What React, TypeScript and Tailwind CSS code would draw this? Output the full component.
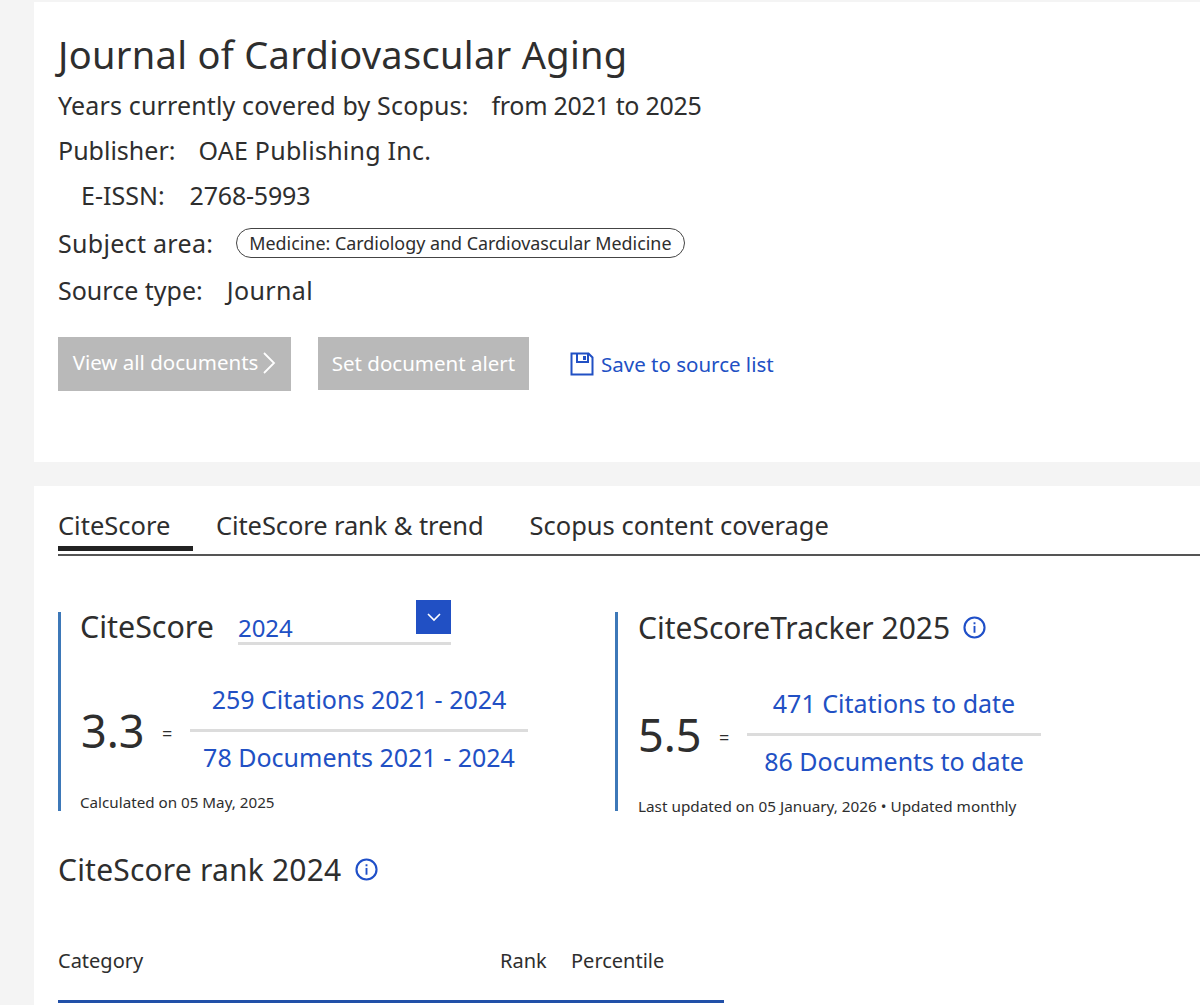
import React from 'react';

const Info = () => (
  <svg width="23" height="23" viewBox="0 0 22 22" fill="none" className="shrink-0">
    <circle cx="11" cy="11" r="9.6" stroke="#1f4fc8" strokeWidth="2" />
    <rect x="10.1" y="9.5" width="1.8" height="6.5" fill="#1f4fc8" />
    <rect x="10.1" y="6" width="1.8" height="1.9" fill="#1f4fc8" />
  </svg>
);

const Fraction = ({ value, top, bottom, width }: { value: string; top: string; bottom: string; width: string }) => (
  <div className="flex items-center">
    <span className="text-[45px] leading-none w-[81px] pb-[6px] text-[#2e2e2e]">{value}</span>
    <span className="text-[18px] w-[28px] text-[#2e2e2e]">=</span>
    <div className={`${width} text-center text-[25px] text-[#2150c4]`}>
      <div className="h-[52px] leading-[38px] border-b-[3px] border-[#dcdcdc]">{top}</div>
      <div className="h-[54px] leading-[50px]">{bottom}</div>
    </div>
  </div>
);

export default function App() {
  return (
    <div
      className="h-[1005px] overflow-hidden bg-[#f4f4f4] pt-[2px] pl-[34px] text-[#2e2e2e]"
      style={{ fontFamily: '"Noto Sans", sans-serif' }}
    >
      {/* Source details */}
      <section className="h-[460px] bg-white pl-[24px] pt-[29px]">
        <h1 className="text-[38px] leading-[46px] tracking-[0.3px]">Journal of Cardiovascular Aging</h1>
        <div className="text-[25px] leading-[45px]">
          <p className="mt-[6px]">
            <span className="tracking-[0.15px]">Years currently covered by Scopus:</span>
            <span className="ml-[23px] tracking-[-0.3px]">from 2021 to 2025</span>
          </p>
          <p>Publisher:<span className="ml-[23px] tracking-[0.25px]">OAE Publishing Inc.</span></p>
          <p className="pl-[23px]">E-ISSN:<span className="ml-[25px] tracking-[-0.2px]">2768-5993</span></p>
          <div className="flex items-center h-[50px]">
            <span className="tracking-[0.3px]">Subject area:</span>
            <span className="ml-[23px] h-[30px] rounded-full border border-[#444] px-[12px] text-[17.9px] leading-[28px]">
              Medicine: Cardiology and Cardiovascular Medicine
            </span>
          </div>
          <p>Source type:<span className="ml-[24px] tracking-[0.4px]">Journal</span></p>
        </div>
        <div className="mt-[24px] flex items-start text-[20.5px]">
          <button className="flex h-[54px] w-[233px] items-center justify-center bg-[#b9b9b9] pb-[3px] text-white">
            View all documents
            <svg width="14" height="24" viewBox="0 0 14 24" fill="none" className="ml-[4px]">
              <path d="M2 2l10 10L2 22" stroke="#fff" strokeWidth="1.8" />
            </svg>
          </button>
          <button className="ml-[27px] h-[53px] w-[211px] bg-[#b9b9b9] text-white">Set document alert</button>
          <span className="ml-[41px] flex h-[54px] items-center text-[#2150c4]">
            <svg width="24" height="24" viewBox="0 0 24 24" fill="none" className="mr-[7px]">
              <path d="M1.5 1.5h17l4 4v17h-21z" stroke="#2150c4" strokeWidth="2" />
              <path d="M7 2v8h11V2" stroke="#2150c4" strokeWidth="2" />
              <rect x="13" y="4" width="3" height="4" fill="#2150c4" />
            </svg>
            Save to source list
          </span>
        </div>
      </section>

      {/* CiteScore tabs and figures */}
      <section className="mt-[24px] h-[519px] bg-white pl-[24px] pt-[20px]">
        <div className="flex h-[50px] border-b-2 border-[#555] text-[25.5px] leading-[38px]">
          <div className="h-[45px] w-[135px] border-b-[5px] border-[#222]">CiteScore</div>
          <div className="ml-[23px] tracking-[-0.1px]">CiteScore rank &amp; trend</div>
          <div className="ml-[46px]">Scopus content coverage</div>
        </div>

        <div className="mt-[56px] flex">
          <div className="h-[199px] w-[557px] border-l-[3px] border-[#3d78b8] pl-[19px]">
            <div className="relative flex h-[34px] items-start">
              <span className="text-[30.4px] leading-[30px]">CiteScore</span>
              <span className="ml-[24px] h-[33px] w-[213px] border-b-[3px] border-[#dcdcdc] text-[24px] leading-[32px] text-[#2150c4]">
                2024
              </span>
              <span className="absolute left-[336px] top-[-12px] flex h-[34px] w-[35px] items-center justify-center bg-[#2150c4]">
                <svg width="16" height="10" viewBox="0 0 16 10" fill="none">
                  <path d="M2 2l6 6 6-6" stroke="#fff" strokeWidth="1.6" />
                </svg>
              </span>
            </div>
            <div className="mt-[34px] ml-[1px]">
              <Fraction value="3.3" top="259 Citations 2021 - 2024" bottom="78 Documents 2021 - 2024" width="w-[338px]" />
            </div>
            <p className="mt-[6px] text-[15.2px] leading-[20px]">Calculated on 05 May, 2025</p>
          </div>

          <div className="h-[199px] border-l-[3px] border-[#3d78b8] pl-[20px]">
            <div className="flex h-[30px] items-center text-[30px]">
              CiteScoreTracker 2025
              <span className="ml-[13px]"><Info /></span>
            </div>
            <div className="mt-[42px]">
              <Fraction value="5.5" top="471 Citations to date" bottom="86 Documents to date" width="w-[294px]" />
            </div>
            <p className="mt-[6px] text-[15.3px] leading-[20px]">Last updated on 05 January, 2026 • Updated monthly</p>
          </div>
        </div>

        <div className="mt-[38px] flex h-[40px] items-center text-[30px] tracking-[0.2px]">
          CiteScore rank 2024
          <span className="ml-[14px]"><Info /></span>
        </div>

        <div className="mt-[56px] flex h-[58px] w-[666px] border-b-[3px] border-[#2150a8] text-[20px] leading-[32px]">
          <div className="w-[442px]">Category</div>
          <div className="w-[71px]">Rank</div>
          <div>Percentile</div>
        </div>
      </section>
    </div>
  );
}
